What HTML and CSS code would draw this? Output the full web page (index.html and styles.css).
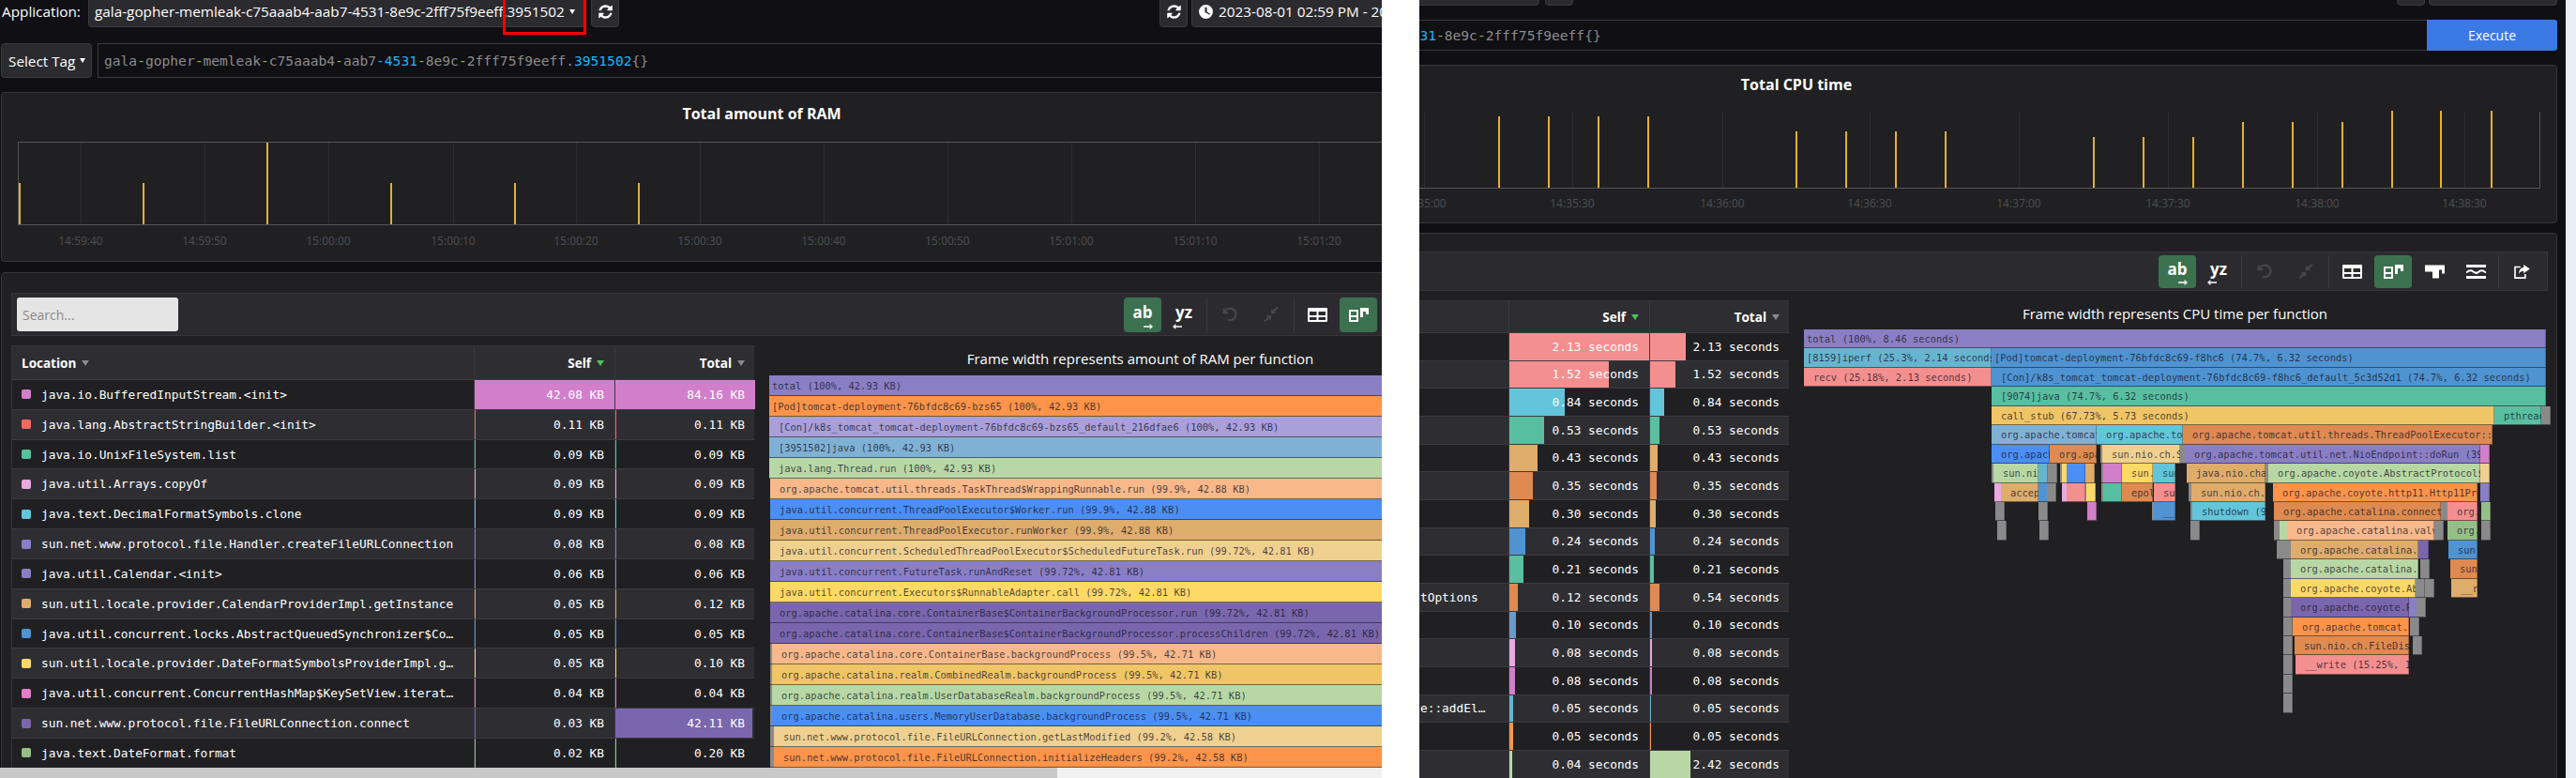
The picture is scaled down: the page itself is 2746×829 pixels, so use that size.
FILE: index.html
```html
<!DOCTYPE html>
<html lang="en">
<head>
<meta charset="utf-8">
<title>Profiling</title>
<link rel="stylesheet" href="styles.css">
</head>
<body>
<svg class="sprite" xmlns="http://www.w3.org/2000/svg">
  <symbol id="i-refresh" viewBox="0 0 1792 1792"><path d="M1639 1056q0 5-1 7-64 268-268 434.500t-478 166.500q-146 0-282.500-55t-243.500-157l-129 129q-19 19-45 19t-45-19-19-45v-448q0-26 19-45t45-19h448q26 0 45 19t19 45-19 45l-137 137q71 66 161 102t187 36q134 0 250-65t186-179q11-17 53-117 8-23 30-23h192q13 0 22.500 9.500t9.500 22.500zm25-800v448q0 26-19 45t-45 19h-448q-26 0-45-19t-19-45 19-45l138-138q-148-137-349-137-134 0-250 65t-186 179q-11 17-53 117-8 23-30 23h-199q-13 0-22.500-9.500t-9.500-22.500v-7q65-268 270-434.500t480-166.500q146 0 284 55.500t245 156.500l130-129q19-19 45-19t45 19 19 45z" fill="#fff"/></symbol>
  <symbol id="i-clock" viewBox="0 0 16 16"><path fill-rule="evenodd" d="M8 1a7 7 0 1 1 0 14A7 7 0 0 1 8 1zM7 3.500V9h1l3.500 2 .6-1L9 8V3.500z" fill="#fff"/></symbol>
  <symbol id="i-undo" viewBox="0 0 20 20"><path d="M3 3v5h5M3.500 8A7 7 0 1 1 8 16.500" fill="none" stroke="currentColor" stroke-width="2.400"/></symbol>
  <symbol id="i-shrink" viewBox="0 0 20 20"><path d="M17 1l1.500 1.500-4.500 4.500 2 2h-6V3l2 2zM3 19l-1.500-1.500L6 13l-2-2h6v6l-2-2z" fill="currentColor"/></symbol>
  <symbol id="i-table" viewBox="0 0 21 15"><path fill-rule="evenodd" d="M1 0h19a1 1 0 0 1 1 1v13a1 1 0 0 1-1 1H1a1 1 0 0 1-1-1V1a1 1 0 0 1 1-1zm1 4v4h7.500V4zm9.500 0v4H19V4zM2 10v3h7.500v-3zm9.500 0v3H19v-3z" fill="#fff"/></symbol>
  <symbol id="i-flame" viewBox="0 0 21 15"><path fill-rule="evenodd" d="M0 2h10v13H0zm2 2v4h6V4zm0 6v3h6v-3z" fill="#fff"/><path d="M12 0h9v7h-3V4h-3v6h-3z" fill="#fff"/></symbol>
  <symbol id="i-icicle" viewBox="0 0 21 14"><path d="M0 0H21V9H18V5H15V14H8V7H0z" fill="#fff"/></symbol>
  <symbol id="i-sandwich" viewBox="0 0 21 15"><path d="M0 0h21v3H0zM0 12h21v3H0z" fill="#fff"/><path d="M0 8.500c3-3 5-3 7.500-1s4 2 6 0 4-2 7.500 1" fill="none" stroke="#fff" stroke-width="2"/></symbol>
  <symbol id="i-export" viewBox="0 0 20 18"><path d="M8 3H1v14h13v-5" fill="none" stroke="#fff" stroke-width="2"/><path d="M12 0l8 5.500-8 5.500V8C9 8 7 9 6 12c0-5 2-8 6-8.500z" fill="#fff"/></symbol>
  <symbol id="i-arrow-r" viewBox="0 0 12 7"><path d="M0 2.500h8V0l4 3.500L8 7V4.500H0z" fill="#fff"/></symbol>
  <symbol id="i-arrow-l" viewBox="0 0 12 7"><path d="M12 2.500H4V0L0 3.500 4 7V4.500h8z" fill="#fff"/></symbol>
</svg>

<main class="pane pane-left">
  <div class="page">
    <div class="topbar">
      <span class="app-label">Application:</span>
      <div class="ctl app-select">gala-gopher-memleak-c75aaab4-aab7-4531-8e9c-2fff75f9eeff.3951502<i class="caret"></i></div>
      <div class="ctl icon-btn"><svg class="ic16"><use href="#i-refresh"/></svg></div>
      <div class="ctl icon-btn push"><svg class="ic16"><use href="#i-refresh"/></svg></div>
      <div class="ctl picker"><svg class="ic16"><use href="#i-clock"/></svg>2023-08-01 02:59 PM - 2023-08-01 03:01 PM</div>
    </div>
    <div class="queryrow">
      <div class="ctl tag-btn">Select Tag<i class="caret"></i></div>
      <div class="query"><span>gala<em>-</em>gopher<em>-</em>memleak<em>-</em>c75aaab4<em>-</em>aab7<u>-4531</u><em>-</em>8e9c<em>-</em>2fff75f9eeff.<u>3951502</u>{}</span></div>
      <div class="exec">Execute</div>
    </div>
    <section class="panel chart">
      <h2 class="chart-title">Total amount of RAM</h2>
      <div class="plot plot-boxed">
        <i class="grid" style="left:66px"></i><i class="grid" style="left:198px"></i><i class="grid" style="left:330px"></i><i class="grid" style="left:463px"></i><i class="grid" style="left:594px"></i><i class="grid" style="left:726px"></i><i class="grid" style="left:858px"></i><i class="grid" style="left:990px"></i><i class="grid" style="left:1122px"></i><i class="grid" style="left:1254px"></i><i class="grid" style="left:1386px"></i><i class="grid" style="left:1518px"></i>
        <i class="spike" style="left:0;height:44px"></i><i class="spike" style="left:132px;height:44px"></i><i class="spike" style="left:264px;height:87px"></i><i class="spike" style="left:396px;height:44px"></i><i class="spike" style="left:528px;height:44px"></i><i class="spike" style="left:660px;height:44px"></i>
      </div>
      <div class="axis">
        <span style="left:67px">14:59:40</span><span style="left:199px">14:59:50</span><span style="left:331px">15:00:00</span><span style="left:464px">15:00:10</span><span style="left:595px">15:00:20</span><span style="left:727px">15:00:30</span><span style="left:859px">15:00:40</span><span style="left:991px">15:00:50</span><span style="left:1123px">15:01:00</span><span style="left:1255px">15:01:10</span><span style="left:1387px">15:01:20</span>
      </div>
    </section>
    <section class="panel flame-panel">
      <div class="toolbar">
        <input class="search" placeholder="Search...">
        <div class="tools">
          <div class="tool on"><span class="tool-txt">ab</span><svg class="arr arr-r"><use href="#i-arrow-r"/></svg></div>
          <div class="tool"><span class="tool-txt">yz</span><svg class="arr arr-l"><use href="#i-arrow-l"/></svg></div>
          <i class="sep"></i>
          <div class="tool off"><svg class="ic18"><use href="#i-undo"/></svg></div>
          <div class="tool off"><svg class="ic18"><use href="#i-shrink"/></svg></div>
          <i class="sep"></i>
          <div class="tool"><svg class="ic21"><use href="#i-table"/></svg></div>
          <div class="tool on"><svg class="ic21"><use href="#i-flame"/></svg></div>
          <div class="tool"><svg class="ic21"><use href="#i-icicle"/></svg></div>
          <div class="tool"><svg class="ic21"><use href="#i-sandwich"/></svg></div>
          <i class="sep"></i>
          <div class="tool"><svg class="ic21"><use href="#i-export"/></svg></div>
        </div>
      </div>
      <div class="viz">
        <div class="tbl">
          <div class="row head"><div class="c loc">Location<i class="tri"></i></div><div class="c num">Self<i class="tri tri-on"></i></div><div class="c num">Total<i class="tri"></i></div></div>
          <div class="row"><div class="c loc"><i class="sw pink"></i>java.io.BufferedInputStream.&lt;init&gt;</div><div class="c num"><b class="bar pink" style="width:100%"></b><span>42.08 KB</span></div><div class="c num"><b class="bar pink" style="width:100%"></b><span>84.16 KB</span></div></div>
          <div class="row"><div class="c loc"><i class="sw red"></i>java.lang.AbstractStringBuilder.&lt;init&gt;</div><div class="c num"><b class="bar red" style="width:1px"></b><span>0.11 KB</span></div><div class="c num"><b class="bar red" style="width:1px"></b><span>0.11 KB</span></div></div>
          <div class="row"><div class="c loc"><i class="sw teal"></i>java.io.UnixFileSystem.list</div><div class="c num"><b class="bar teal" style="width:1px"></b><span>0.09 KB</span></div><div class="c num"><b class="bar teal" style="width:1px"></b><span>0.09 KB</span></div></div>
          <div class="row"><div class="c loc"><i class="sw lilac"></i>java.util.Arrays.copyOf</div><div class="c num"><b class="bar lilac" style="width:1px"></b><span>0.09 KB</span></div><div class="c num"><b class="bar lilac" style="width:1px"></b><span>0.09 KB</span></div></div>
          <div class="row"><div class="c loc"><i class="sw cyan"></i>java.text.DecimalFormatSymbols.clone</div><div class="c num"><b class="bar cyan" style="width:1px"></b><span>0.09 KB</span></div><div class="c num"><b class="bar cyan" style="width:1px"></b><span>0.09 KB</span></div></div>
          <div class="row"><div class="c loc"><i class="sw violet"></i>sun.net.www.protocol.file.Handler.createFileURLConnection</div><div class="c num"><b class="bar violet" style="width:1px"></b><span>0.08 KB</span></div><div class="c num"><b class="bar violet" style="width:1px"></b><span>0.08 KB</span></div></div>
          <div class="row"><div class="c loc"><i class="sw violet"></i>java.util.Calendar.&lt;init&gt;</div><div class="c num"><b class="bar violet" style="width:1px"></b><span>0.06 KB</span></div><div class="c num"><b class="bar violet" style="width:1px"></b><span>0.06 KB</span></div></div>
          <div class="row"><div class="c loc"><i class="sw tan"></i>sun.util.locale.provider.CalendarProviderImpl.getInstance</div><div class="c num"><b class="bar tan" style="width:1px"></b><span>0.05 KB</span></div><div class="c num"><b class="bar tan" style="width:1px"></b><span>0.12 KB</span></div></div>
          <div class="row"><div class="c loc"><i class="sw steel"></i>java.util.concurrent.locks.AbstractQueuedSynchronizer$Co…</div><div class="c num"><b class="bar steel" style="width:1px"></b><span>0.05 KB</span></div><div class="c num"><b class="bar steel" style="width:1px"></b><span>0.05 KB</span></div></div>
          <div class="row"><div class="c loc"><i class="sw yellow"></i>sun.util.locale.provider.DateFormatSymbolsProviderImpl.g…</div><div class="c num"><b class="bar yellow" style="width:1px"></b><span>0.05 KB</span></div><div class="c num"><b class="bar yellow" style="width:1px"></b><span>0.10 KB</span></div></div>
          <div class="row"><div class="c loc"><i class="sw magenta"></i>java.util.concurrent.ConcurrentHashMap$KeySetView.iterat…</div><div class="c num"><b class="bar magenta" style="width:1px"></b><span>0.04 KB</span></div><div class="c num"><b class="bar magenta" style="width:1px"></b><span>0.04 KB</span></div></div>
          <div class="row"><div class="c loc"><i class="sw deep"></i>sun.net.www.protocol.file.FileURLConnection.connect</div><div class="c num"><b class="bar deep" style="width:1px"></b><span>0.03 KB</span></div><div class="c num"><b class="bar deep" style="width:98%"></b><span>42.11 KB</span></div></div>
          <div class="row"><div class="c loc"><i class="sw sage"></i>java.text.DateFormat.format</div><div class="c num"><b class="bar sage" style="width:1px"></b><span>0.02 KB</span></div><div class="c num"><b class="bar sage" style="width:1px"></b><span>0.20 KB</span></div></div>
        </div>
        <div class="flame">
          <h3 class="flame-title">Frame width represents amount of RAM per function</h3>
          <div class="fr-row"><div class="fr violet lo" style="left:0;width:791px">total (100%, 42.93 KB)</div></div>
          <div class="fr-row"><div class="fr orange lo" style="left:0;width:791px">[Pod]tomcat-deployment-76bfdc8c69-bzs65 (100%, 42.93 KB)</div></div>
          <div class="fr-row"><div class="fr lav" style="left:0;width:791px">[Con]/k8s_tomcat_tomcat-deployment-76bfdc8c69-bzs65_default_216dfae6 (100%, 42.93 KB)</div></div>
          <div class="fr-row"><div class="fr sky" style="left:0;width:791px">[3951502]java (100%, 42.93 KB)</div></div>
          <div class="fr-row"><div class="fr green" style="left:0;width:791px">java.lang.Thread.run (100%, 42.93 KB)</div></div>
          <div class="fr-row"><div class="fr peach" style="left:1px;width:790px">org.apache.tomcat.util.threads.TaskThread$WrappingRunnable.run (99.9%, 42.88 KB)</div></div>
          <div class="fr-row"><div class="fr blue" style="left:1px;width:790px">java.util.concurrent.ThreadPoolExecutor$Worker.run (99.9%, 42.88 KB)</div></div>
          <div class="fr-row"><div class="fr tan" style="left:1px;width:790px">java.util.concurrent.ThreadPoolExecutor.runWorker (99.9%, 42.88 KB)</div></div>
          <div class="fr-row"><div class="fr cream" style="left:1px;width:790px">java.util.concurrent.ScheduledThreadPoolExecutor$ScheduledFutureTask.run (99.72%, 42.81 KB)</div></div>
          <div class="fr-row"><div class="fr violet" style="left:1px;width:790px">java.util.concurrent.FutureTask.runAndReset (99.72%, 42.81 KB)</div></div>
          <div class="fr-row"><div class="fr yellow" style="left:1px;width:790px">java.util.concurrent.Executors$RunnableAdapter.call (99.72%, 42.81 KB)</div></div>
          <div class="fr-row"><div class="fr deep" style="left:1px;width:790px">org.apache.catalina.core.ContainerBase$ContainerBackgroundProcessor.run (99.72%, 42.81 KB)</div></div>
          <div class="fr-row"><div class="fr deep" style="left:1px;width:790px">org.apache.catalina.core.ContainerBase$ContainerBackgroundProcessor.processChildren (99.72%, 42.81 KB)</div></div>
          <div class="fr-row"><div class="fr gray" style="left:1px;width:2px"></div><div class="fr peach" style="left:3px;width:788px">org.apache.catalina.core.ContainerBase.backgroundProcess (99.5%, 42.71 KB)</div></div>
          <div class="fr-row"><div class="fr gray" style="left:1px;width:2px"></div><div class="fr gold" style="left:3px;width:788px">org.apache.catalina.realm.CombinedRealm.backgroundProcess (99.5%, 42.71 KB)</div></div>
          <div class="fr-row"><div class="fr gray" style="left:1px;width:2px"></div><div class="fr green" style="left:3px;width:788px">org.apache.catalina.realm.UserDatabaseRealm.backgroundProcess (99.5%, 42.71 KB)</div></div>
          <div class="fr-row"><div class="fr gray" style="left:1px;width:2px"></div><div class="fr blue" style="left:3px;width:788px">org.apache.catalina.users.MemoryUserDatabase.backgroundProcess (99.5%, 42.71 KB)</div></div>
          <div class="fr-row"><div class="fr gray" style="left:1px;width:4px"></div><div class="fr cream" style="left:5px;width:786px">sun.net.www.protocol.file.FileURLConnection.getLastModified (99.2%, 42.58 KB)</div></div>
          <div class="fr-row"><div class="fr gray" style="left:1px;width:4px"></div><div class="fr orange" style="left:5px;width:786px">sun.net.www.protocol.file.FileURLConnection.initializeHeaders (99.2%, 42.58 KB)</div></div>
        </div>
      </div>
    </section>
  </div>
  <div class="redbox"></div>
  <div class="hscroll"><i class="hthumb"></i></div>
</main>

<div class="gutter"></div>

<main class="pane pane-right">
  <div class="page">
    <div class="topbar">
      <span class="app-label"></span>
      <div class="ctl app-select"></div>
      <div class="ctl icon-btn"></div>
      <div class="ctl icon-btn push"></div>
      <div class="ctl picker"></div>
    </div>
    <div class="queryrow">
      <div class="ctl tag-btn"></div>
      <div class="query"><span>gala<em>-</em>gopher<em>-</em>memleak<em>-</em>c75aaab4<em>-</em>aab7<u>-4531</u><em>-</em>8e9c<em>-</em>2fff75f9eeff{}</span></div>
      <div class="exec">Execute</div>
    </div>
    <section class="panel chart">
      <h2 class="chart-title">Total CPU time</h2>
      <div class="plot plot-open">
        <i class="grid" style="left:396px"></i><i class="grid" style="left:554px"></i><i class="grid" style="left:714px"></i><i class="grid" style="left:871px"></i><i class="grid" style="left:1030px"></i><i class="grid" style="left:1189px"></i><i class="grid" style="left:1348px"></i><i class="grid" style="left:1505px"></i>
        <i class="spike" style="left:475px;height:76px"></i><i class="spike" style="left:528px;height:76px"></i><i class="spike" style="left:581px;height:76px"></i><i class="spike" style="left:634px;height:76px"></i>
        <i class="spike" style="left:792px;height:60px"></i><i class="spike" style="left:845px;height:60px"></i><i class="spike" style="left:898px;height:60px"></i><i class="spike" style="left:951px;height:60px"></i>
        <i class="spike" style="left:1109px;height:54px"></i><i class="spike" style="left:1162px;height:54px"></i><i class="spike" style="left:1215px;height:54px"></i>
        <i class="spike" style="left:1268px;height:70px"></i><i class="spike" style="left:1321px;height:70px"></i><i class="spike" style="left:1374px;height:70px"></i>
        <i class="spike" style="left:1427px;height:82px"></i><i class="spike" style="left:1479px;height:82px"></i><i class="spike" style="left:1533px;height:82px"></i>
      </div>
      <div class="axis">
        <span style="left:396px">14:35:00</span><span style="left:554px">14:35:30</span><span style="left:714px">14:36:00</span><span style="left:871px">14:36:30</span><span style="left:1030px">14:37:00</span><span style="left:1189px">14:37:30</span><span style="left:1348px">14:38:00</span><span style="left:1505px">14:38:30</span>
      </div>
    </section>
    <section class="panel flame-panel">
      <div class="toolbar">
        <div class="tools">
          <div class="tool on"><span class="tool-txt">ab</span><svg class="arr arr-r"><use href="#i-arrow-r"/></svg></div>
          <div class="tool"><span class="tool-txt">yz</span><svg class="arr arr-l"><use href="#i-arrow-l"/></svg></div>
          <i class="sep"></i>
          <div class="tool off"><svg class="ic18"><use href="#i-undo"/></svg></div>
          <div class="tool off"><svg class="ic18"><use href="#i-shrink"/></svg></div>
          <i class="sep"></i>
          <div class="tool"><svg class="ic21"><use href="#i-table"/></svg></div>
          <div class="tool on"><svg class="ic21"><use href="#i-flame"/></svg></div>
          <div class="tool"><svg class="ic21"><use href="#i-icicle"/></svg></div>
          <div class="tool"><svg class="ic21"><use href="#i-sandwich"/></svg></div>
          <i class="sep"></i>
          <div class="tool"><svg class="ic21"><use href="#i-export"/></svg></div>
        </div>
      </div>
      <div class="viz">
        <div class="tbl">
          <div class="row head"><div class="c loc"></div><div class="c num">Self<i class="tri tri-on"></i></div><div class="c num">Total<i class="tri"></i></div></div>
          <div class="row"><div class="c loc"></div><div class="c num"><b class="bar salmon" style="width:149px"></b><span>2.13 seconds</span></div><div class="c num"><b class="bar salmon" style="width:38px"></b><span>2.13 seconds</span></div></div>
          <div class="row"><div class="c loc"></div><div class="c num"><b class="bar salmon" style="width:106px"></b><span>1.52 seconds</span></div><div class="c num"><b class="bar salmon" style="width:27px"></b><span>1.52 seconds</span></div></div>
          <div class="row"><div class="c loc"></div><div class="c num"><b class="bar cyan" style="width:59px"></b><span>0.84 seconds</span></div><div class="c num"><b class="bar cyan" style="width:15px"></b><span>0.84 seconds</span></div></div>
          <div class="row"><div class="c loc"></div><div class="c num"><b class="bar teal" style="width:37px"></b><span>0.53 seconds</span></div><div class="c num"><b class="bar teal" style="width:10px"></b><span>0.53 seconds</span></div></div>
          <div class="row"><div class="c loc"></div><div class="c num"><b class="bar tan" style="width:30px"></b><span>0.43 seconds</span></div><div class="c num"><b class="bar tan" style="width:8px"></b><span>0.43 seconds</span></div></div>
          <div class="row"><div class="c loc"></div><div class="c num"><b class="bar rust" style="width:25px"></b><span>0.35 seconds</span></div><div class="c num"><b class="bar rust" style="width:7px"></b><span>0.35 seconds</span></div></div>
          <div class="row"><div class="c loc"></div><div class="c num"><b class="bar tan" style="width:21px"></b><span>0.30 seconds</span></div><div class="c num"><b class="bar tan" style="width:6px"></b><span>0.30 seconds</span></div></div>
          <div class="row"><div class="c loc"></div><div class="c num"><b class="bar steel" style="width:17px"></b><span>0.24 seconds</span></div><div class="c num"><b class="bar steel" style="width:5px"></b><span>0.24 seconds</span></div></div>
          <div class="row"><div class="c loc"></div><div class="c num"><b class="bar teal" style="width:15px"></b><span>0.21 seconds</span></div><div class="c num"><b class="bar teal" style="width:4px"></b><span>0.21 seconds</span></div></div>
          <div class="row"><div class="c loc"><span class="tail">tOptions</span></div><div class="c num"><b class="bar rust" style="width:9px"></b><span>0.12 seconds</span></div><div class="c num"><b class="bar rust" style="width:10px"></b><span>0.54 seconds</span></div></div>
          <div class="row"><div class="c loc"></div><div class="c num"><b class="bar steel2" style="width:7px"></b><span>0.10 seconds</span></div><div class="c num"><b class="bar steel2" style="width:2px"></b><span>0.10 seconds</span></div></div>
          <div class="row"><div class="c loc"></div><div class="c num"><b class="bar lilac" style="width:6px"></b><span>0.08 seconds</span></div><div class="c num"><b class="bar lilac" style="width:2px"></b><span>0.08 seconds</span></div></div>
          <div class="row"><div class="c loc"></div><div class="c num"><b class="bar pink" style="width:6px"></b><span>0.08 seconds</span></div><div class="c num"><b class="bar pink" style="width:2px"></b><span>0.08 seconds</span></div></div>
          <div class="row"><div class="c loc"><span class="tail">e::addEl…</span></div><div class="c num"><b class="bar aqua" style="width:4px"></b><span>0.05 seconds</span></div><div class="c num"><b class="bar aqua" style="width:1px"></b><span>0.05 seconds</span></div></div>
          <div class="row"><div class="c loc"></div><div class="c num"><b class="bar orange" style="width:4px"></b><span>0.05 seconds</span></div><div class="c num"><b class="bar orange" style="width:1px"></b><span>0.05 seconds</span></div></div>
          <div class="row"><div class="c loc"></div><div class="c num"><b class="bar green" style="width:3px"></b><span>0.04 seconds</span></div><div class="c num"><b class="bar green" style="width:43px"></b><span>2.42 seconds</span></div></div>
        </div>
        <div class="flame">
          <h3 class="flame-title">Frame width represents CPU time per function</h3>
          <div class="fr-row"><div class="fr violet lo" style="left:0;width:791px">total (100%, 8.46 seconds)</div></div>
          <div class="fr-row"><div class="fr aqua lo" style="left:0;width:200px">[8159]iperf (25.3%, 2.14 seconds)</div><div class="fr steel lo" style="left:200px;width:591px">[Pod]tomcat-deployment-76bfdc8c69-f8hc6 (74.7%, 6.32 seconds)</div></div>
          <div class="fr-row"><div class="fr salmon" style="left:0;width:200px">recv (25.18%, 2.13 seconds)</div><div class="fr steel" style="left:200px;width:591px">[Con]/k8s_tomcat_tomcat-deployment-76bfdc8c69-f8hc6_default_5c3d52d1 (74.7%, 6.32 seconds)</div></div>
          <div class="fr-row"><div class="fr teal" style="left:200px;width:591px">[9074]java (74.7%, 6.32 seconds)</div></div>
          <div class="fr-row"><div class="fr gold" style="left:200px;width:536px">call_stub (67.73%, 5.73 seconds)</div><div class="fr teal" style="left:736px;width:50px">pthread_start</div><div class="fr gray" style="left:786px;width:3px"></div></div>
          <div class="fr-row"><div class="fr sky" style="left:200px;width:112px">org.apache.tomcat.util</div><div class="fr cyan" style="left:312px;width:92px">org.apache.tomcat.util</div><div class="fr rust" style="left:404px;width:330px">org.apache.tomcat.util.threads.ThreadPoolExecutor::runWorker</div></div>
          <div class="fr-row"><div class="fr blue" style="left:200px;width:62px">org.apache</div><div class="fr rust" style="left:262px;width:50px">org.apache</div><div class="fr gray" style="left:316px;width:2px"></div><div class="fr cream" style="left:318px;width:83px">sun.nio.ch.SelectorImpl</div><div class="fr gray" style="left:401px;width:2px"></div><div class="fr violet" style="left:406px;width:315px">org.apache.tomcat.util.net.NioEndpoint::doRun (39.5%, 3.34 seconds)</div><div class="fr pink" style="left:721px;width:9px"></div></div>
          <div class="fr-row"><div class="fr gray" style="left:200px;width:2px"></div><div class="fr green" style="left:202px;width:48px">sun.nio.ch</div><div class="fr aqua" style="left:250px;width:10px"></div><div class="fr gray" style="left:260px;width:2px"></div><div class="fr gray" style="left:273px;width:2px"></div><div class="fr yellow" style="left:275px;width:5px"></div><div class="fr blue" style="left:280px;width:20px"></div><div class="fr tan" style="left:300px;width:10px"></div><div class="fr gray" style="left:317px;width:2px"></div><div class="fr pink" style="left:319px;width:20px"></div><div class="fr yellow" style="left:339px;width:33px">sun.nio.ch</div><div class="fr cyan" style="left:372px;width:24px">sun.nio</div><div class="fr tan" style="left:408px;width:84px">java.nio.channels</div><div class="fr gray" style="left:492px;width:3px"></div><div class="fr green" style="left:495px;width:226px">org.apache.coyote.AbstractProtocol$Conn</div><div class="fr cream" style="left:721px;width:7px"></div></div>
          <div class="fr-row"><div class="fr lilac" style="left:203px;width:7px"></div><div class="fr tan" style="left:210px;width:40px">accept0</div><div class="fr steel" style="left:250px;width:9px"></div><div class="fr gray" style="left:259px;width:3px"></div><div class="fr lilac" style="left:275px;width:5px"></div><div class="fr salmon" style="left:280px;width:20px"></div><div class="fr gray" style="left:300px;width:1px"></div><div class="fr yellow" style="left:301px;width:9px"></div><div class="fr gray" style="left:317px;width:2px"></div><div class="fr teal" style="left:319px;width:20px"></div><div class="fr rust" style="left:339px;width:33px">epoll_wait</div><div class="fr salmon" style="left:373px;width:23px">sun.nio</div><div class="fr gray" style="left:410px;width:3px"></div><div class="fr tan" style="left:413px;width:79px">sun.nio.ch.SocketChannel</div><div class="fr orange" style="left:500px;width:218px">org.apache.coyote.http11.Http11Processor.service</div><div class="fr violet" style="left:721px;width:7px"></div></div>
          <div class="fr-row"><div class="fr gray" style="left:204px;width:4px"></div><div class="fr gray" style="left:250px;width:2px"></div><div class="fr pink" style="left:302px;width:8px"></div><div class="fr gray" style="left:371px;width:2px"></div><div class="fr steel" style="left:373px;width:23px">__read</div><div class="fr gray" style="left:412px;width:2px"></div><div class="fr cyan" style="left:414px;width:78px">shutdown (9.2%, 0.78 sec</div><div class="fr rust" style="left:501px;width:178px">org.apache.catalina.connector.CoyoteAdapter</div><div class="fr gray" style="left:679px;width:6px"></div><div class="fr salmon" style="left:686px;width:32px">org.apache</div><div class="fr sage" style="left:722px;width:6px"></div></div>
          <div class="fr-row"><div class="fr gray" style="left:206px;width:2px"></div><div class="fr gray" style="left:251px;width:2px"></div><div class="fr gray" style="left:412px;width:3px"></div><div class="fr gray" style="left:501px;width:6px"></div><div class="fr green" style="left:507px;width:8px"></div><div class="fr peach" style="left:515px;width:157px">org.apache.catalina.valves.ErrorReport</div><div class="fr gray" style="left:672px;width:2px"></div><div class="fr sage" style="left:686px;width:32px">org.apache</div><div class="fr gray" style="left:722px;width:6px"></div></div>
          <div class="fr-row"><div class="fr gray" style="left:504px;width:2px"></div><div class="fr gray" style="left:511px;width:5px"></div><div class="fr tan" style="left:519px;width:136px">org.apache.catalina.core.Standard</div><div class="fr deep" style="left:655px;width:11px"></div><div class="fr steel" style="left:687px;width:31px">sun.nio</div></div>
          <div class="fr-row"><div class="fr gray" style="left:511px;width:2px"></div><div class="fr green" style="left:519px;width:136px">org.apache.catalina.core.Standard</div><div class="fr gray" style="left:657px;width:7px"></div><div class="fr rust" style="left:689px;width:29px">sun.nio</div></div>
          <div class="fr-row"><div class="fr gray" style="left:511px;width:2px"></div><div class="fr yellow" style="left:519px;width:133px">org.apache.coyote.Abstract</div><div class="fr gray" style="left:652px;width:4px"></div><div class="fr gray" style="left:662px;width:2px"></div><div class="fr tan" style="left:690px;width:28px">__read</div></div>
          <div class="fr-row"><div class="fr gray" style="left:511px;width:2px"></div><div class="fr deep" style="left:519px;width:126px">org.apache.coyote.Response</div><div class="fr violet" style="left:645px;width:8px"></div><div class="fr gray" style="left:653px;width:3px"></div></div>
          <div class="fr-row"><div class="fr gray" style="left:511px;width:2px"></div><div class="fr orange" style="left:521px;width:124px">org.apache.tomcat.util</div><div class="fr gray" style="left:646px;width:4px"></div></div>
          <div class="fr-row"><div class="fr gray" style="left:511px;width:2px"></div><div class="fr rust" style="left:523px;width:122px">sun.nio.ch.FileDispatcher</div><div class="fr gray" style="left:649px;width:2px"></div></div>
          <div class="fr-row"><div class="fr gray" style="left:511px;width:2px"></div><div class="fr salmon" style="left:524px;width:121px">__write (15.25%, 1.29 sec</div></div>
          <div class="fr-row"><div class="fr gray" style="left:511px;width:2px"></div></div>
          <div class="fr-row"><div class="fr gray" style="left:511px;width:2px"></div></div>
        </div>
      </div>
    </section>
  </div>
</main>
<div class="edge"></div>
</body>
</html>
```
FILE: styles.css
```css
* { box-sizing: border-box; }
html, body { margin: 0; height: 829px; overflow: hidden; }
body {
  display: flex;
  width: 2746px;
  background: #fff;
  font-family: "Open Sans", "Liberation Sans", sans-serif;
  color: #fff;
}
.sprite { display: none; }
.gutter { width: 40px; flex: none; background: #fff; }
.edge { width: 11px; flex: none; background: #e9edf5; }

.pane {
  position: relative;
  flex: none;
  height: 829px;
  overflow: hidden;
  background: #0f0f14;
}
.pane-left {
  width: 1473px;
  --top: -5px;
  --app-w: 531px;
  --ref-gap: 5px;
  --picker: 353px;
  --bar-gap: 17px;
  --query-h: 37px;
  --plot-h: 89px;
  --title-h: 52px;
  --title-lh: 44px;
  --axis-h: 38px;
  --panel-gap: 11px;
  --chart-gap: 15px;
  --fp-pad: 21px;
  --toolbar-h: 46px;
  --tool-h: 37px;
  --head: 36px;
  --row: 31.83px;
  --ftitle: 32px;
  --fr: 22.03px;
  --query-shift: 0px;
}
.pane-right {
  width: 1222px;
  --top: -28px;
  --app-w: 444px;
  --ref-gap: 6px;
  --picker: 137px;
  --bar-gap: 15px;
  --query-h: 33px;
  --plot-h: 82px;
  --title-h: 49px;
  --title-lh: 40px;
  --axis-h: 36px;
  --panel-gap: 10px;
  --chart-gap: 15px;
  --fp-pad: 19px;
  --toolbar-h: 42px;
  --tool-h: 35px;
  --head: 34px;
  --row: 29.67px;
  --ftitle: 31px;
  --fr: 20.45px;
  --query-shift: -17px;
}
.pane-right .page { margin-left: -410px; }
.page {
  width: 1623px;
  margin-top: var(--top);
  padding-left: 1px;
}

/* top bar */
.topbar {
  display: flex;
  align-items: stretch;
  height: 34px;
  margin-bottom: var(--bar-gap);
}
.app-label {
  width: 93px;
  flex: none;
  padding-left: 1px;
  font-size: 15.3px;
  line-height: 34px;
}
.ctl {
  display: flex;
  align-items: center;
  flex: none;
  background: #2b2b2f;
  border: 1px solid #3a3a3f;
  border-radius: 4px;
  font-size: 15.3px;
  white-space: nowrap;
}
.app-select { width: var(--app-w); padding-left: 6px; }
.icon-btn { width: 30px; justify-content: center; margin-left: var(--ref-gap); }
.icon-btn.push { margin-left: auto; }
.picker { width: var(--picker); margin-left: 4px; padding-left: 6px; gap: 5px; overflow: hidden; }
.ic16 { width: 17px; height: 17px; flex: none; }
.caret {
  display: inline-block;
  margin-left: 5px;
  border-left: 3px solid transparent;
  border-right: 3px solid transparent;
  border-top: 5px solid #fff;
}

/* query row */
.queryrow {
  display: flex;
  height: var(--query-h);
  margin-bottom: var(--chart-gap);
}
.tag-btn { width: 97px; padding-left: 7px; }
.query {
  flex: 1;
  margin-left: 6px;
  padding-left: 6px;
  display: flex;
  align-items: center;
  background: #0f0f14;
  border: 1px solid #3a3a3f;
  border-right: 0;
  font-family: "DejaVu Sans Mono", "Liberation Mono", monospace;
  font-size: 14.6px;
  color: #8c8c8c;
  white-space: nowrap;
  overflow: hidden;
}
.query span { margin-left: var(--query-shift); }
.query em { font-style: normal; color: #8fb93a; }
.query u { text-decoration: none; color: #1bb5f2; }
.exec {
  flex: none;
  width: 139px;
  background: #3a78e6;
  border-radius: 0 3px 3px 0;
  display: flex;
  align-items: center;
  justify-content: center;
  font-size: 14px;
}

/* panels */
.panel {
  background: #202022;
  border: 1px solid #35353a;
  border-radius: 4px;
}
.chart { margin-bottom: var(--panel-gap); }
.chart-title {
  margin: 0;
  height: var(--title-h);
  line-height: var(--title-lh);
  text-align: center;
  font-size: 16px;
  font-weight: 700;
}
.plot {
  position: relative;
  height: var(--plot-h);
  margin-left: 17px;
  width: 1586px;
  border-bottom: 1px solid #55555a;
}
.plot-boxed { border-top: 1px solid #55555a; border-left: 1px solid #55555a; }
.plot-open { border-right: 1px solid #55555a; }
.grid {
  position: absolute;
  top: 0;
  bottom: 0;
  width: 1px;
  background: #2e2e32;
}
.spike {
  position: absolute;
  bottom: 0;
  width: 2px;
  background: #e3b031;
}
.axis {
  position: relative;
  height: var(--axis-h);
  margin-left: 17px;
  font-size: 12px;
  color: #4f4f54;
}
.axis span {
  position: absolute;
  top: 0;
  line-height: calc(var(--axis-h) - 5px);
  transform: translateX(-50%);
}

/* flame panel */
.flame-panel {
  height: 700px;
  padding: var(--fp-pad) 10px 0;
}
.toolbar {
  display: flex;
  align-items: center;
  justify-content: space-between;
  width: 1601px;
  height: var(--toolbar-h);
  background: #2b2b2f;
  border: 1px solid #35353a;
}
.search {
  width: 172px;
  height: 36px;
  margin-left: 5px;
  padding: 0 6px;
  background: #e5e5e5;
  border: 0;
  border-radius: 3px;
  font: 14px "Open Sans", sans-serif;
}
.search::placeholder { color: #8a8a8a; }
.tools {
  display: flex;
  align-items: center;
  gap: 4px;
  margin-left: auto;
  padding-right: 7px;
}
.tool {
  position: relative;
  display: flex;
  align-items: center;
  justify-content: center;
  width: 40px;
  height: var(--tool-h);
  border-radius: 4px;
}
.tool.on { background: #3c7150; }
.tool.off { color: #47474c; }
.tool-txt { font-size: 17px; font-weight: 700; line-height: 1; margin-top: -6px; }
.arr { position: absolute; bottom: 3px; width: 10px; height: 6px; }
.arr-r { right: 9px; }
.arr-l { left: 8px; }
.sep { width: 1px; align-self: stretch; background: #3a3a3f; }
.ic18 { width: 18px; height: 18px; }
.ic21 { width: 21px; height: 15px; }

.viz {
  display: flex;
  align-items: flex-start;
  margin-top: 10px;
  gap: 16px;
}

/* table */
.tbl {
  flex: none;
  width: 792px;
  border-top: 1px solid #35353a;
  border-left: 1px solid #35353a;
  font-family: "DejaVu Sans Mono", "Liberation Mono", monospace;
  font-size: 12.8px;
}
.row {
  display: grid;
  grid-template-columns: 492px 150px 150px;
  height: var(--row);
  border-bottom: 1px solid #3a3a3f;
  background: #2e2e32;
}
.row:nth-child(even) { background: #202022; }
.row.head {
  height: var(--head);
  background: #2e2e32;
  font-family: "Open Sans", sans-serif;
  font-size: 13.5px;
  font-weight: 700;
}
.c {
  position: relative;
  display: flex;
  align-items: center;
  white-space: nowrap;
  overflow: hidden;
}
.c + .c { border-left: 1px solid #3a3a3f; }
.loc { padding-left: 10px; }
.num { justify-content: flex-end; padding-right: 11px; }
.num span { position: relative; }
.bar { position: absolute; left: 0; top: 0; bottom: 0; }
.sw { width: 10px; height: 10px; margin-right: 11px; border-radius: 2px; flex: none; }
.tail { margin-left: 388px; }
.tri {
  margin-left: 6px;
  border-left: 4.5px solid transparent;
  border-right: 4.5px solid transparent;
  border-top: 6px solid #8a8a8a;
}
.tri-on { border-top-color: #4fc35a; }

/* flame */
.flame { flex: none; width: 791px; }
.flame-title {
  margin: 0;
  height: var(--ftitle);
  line-height: calc(var(--ftitle) - 3px);
  text-align: center;
  font-size: 15px;
  font-weight: 400;
}
.fr-row { position: relative; height: var(--fr); }
.fr {
  position: absolute;
  top: 0;
  height: 100%;
  padding-left: 10px;
  overflow: hidden;
  white-space: nowrap;
  font-family: "DejaVu Sans Mono", "Liberation Mono", monospace;
  font-size: 10.43px;
  line-height: var(--fr);
  color: rgba(22, 22, 40, 0.78);
  border-bottom: 1px solid rgba(20, 20, 25, 0.55);
  box-shadow: inset -1px 0 0 rgba(20, 20, 25, 0.3);
}
.fr.lo { padding-left: 3px; }

/* overlays on the left pane */
.redbox {
  position: absolute;
  left: 536px;
  top: -10px;
  width: 89px;
  height: 47px;
  border: 3px solid #f00;
}
.hscroll {
  position: absolute;
  left: 0;
  right: 0;
  bottom: 0;
  height: 11px;
  background: #f1f1f1;
}
.hthumb { display: block; width: 1127px; height: 100%; background: #c8c8c8; }

/* frame + swatch colours */
.pink { background-color: #d27fcb; }
.red { background-color: #ef6a63; }
.teal { background-color: #58bfa0; }
.lilac { background-color: #e9a8e2; }
.cyan { background-color: #63c5da; }
.violet { background-color: #8a7fc4; }
.tan { background-color: #deac6b; }
.steel { background-color: #4f93d1; }
.steel2 { background-color: #6898cc; }
.yellow { background-color: #ffd966; }
.magenta { background-color: #e27fc8; }
.deep { background-color: #7a66ad; }
.sage { background-color: #95bf87; }
.orange { background-color: #fd9449; }
.lav { background-color: #a99fd9; }
.sky { background-color: #7fb1d5; }
.green { background-color: #b7d8a5; }
.peach { background-color: #f8b88a; }
.blue { background-color: #4b8ff5; }
.cream { background-color: #f0d08f; }
.gold { background-color: #f0c566; }
.salmon { background-color: #f48f8f; }
.rust { background-color: #de8a50; }
.gray { background-color: #8a8a8a; }
.aqua { background-color: #66b5cf; }
```
